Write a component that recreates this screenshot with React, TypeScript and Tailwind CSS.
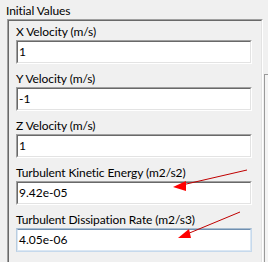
import React from "react";

const fields = [
  { label: "X Velocity (m/s)", value: "1" },
  { label: "Y Velocity (m/s)", value: "-1" },
  { label: "Z Velocity (m/s)", value: "1" },
  { label: "Turbulent Kinetic Energy (m2/s2)", value: "9.42e-05" },
  { label: "Turbulent Dissipation Rate (m2/s3)", value: "4.05e-06", hot: true },
];

function Field({ label, value, hot }: { label: string; value: string; hot?: boolean }) {
  return (
    <div className="flex flex-col">
      <div className="h-[16px] leading-[16px] text-[12px] tracking-[-0.1px] text-black whitespace-nowrap">{label}</div>
      <div
        className={`h-[24px] border ${
          hot
            ? "border-t-[#a8bccf] border-l-[#b9cde0] border-r-[#c6d9ec] border-b-[#c6d9ec]"
            : "border-t-[#a0a0a0] border-l-[#a0a0a0] border-r-[#ffffff] border-b-[#ffffff]"
        }`}
      >
        <div
          className={`h-full border bg-white flex items-center pl-[1px] text-[12px] text-black ${
            hot
              ? "border-t-[#6f8fb0] border-l-[#dbe7f3] border-r-[#dbe7f3] border-b-[#dbe7f3]"
              : "border-t-[#696969] border-l-[#696969] border-r-[#e3e3e3] border-b-[#e3e3e3]"
          }`}
        >
          {value}
        </div>
      </div>
    </div>
  );
}

export default function App() {
  return (
    <div
      className="relative w-[268px] h-[262px] overflow-hidden bg-[#f0f0f0]"
      style={{ fontFamily: 'Lato, "Noto Sans", sans-serif' }}
    >
      <div className="h-[19px] pl-[6px] pt-[3px] text-[12px] leading-[16px] tracking-[-0.1px] text-black">Initial Values</div>
      <div className="flex">
        <div className="ml-[7px] w-[256px] h-[260px] border-t border-l border-t-[#a0a0a0] border-l-[#a0a0a0] border-r border-r-[#ffffff]">
          <div className="h-full border-t border-l border-t-[#696969] border-l-[#696969] border-r border-r-[#e3e3e3] pt-[3px] pl-[7px] pr-[9px] flex flex-col gap-[7px]">
            {fields.map((f, i) => (
              <Field key={i} label={f.label} value={f.value} hot={f.hot} />
            ))}
          </div>
        </div>
        <div className="mt-[55px] ml-[1px] flex-1 h-[200px] border-t border-l border-[#9a9a9a] bg-[#f4f4f4]" />
      </div>

      {/* red arrows */}
      <svg className="absolute left-0 top-0 pointer-events-none" width="268" height="262" viewBox="0 0 268 262">
        <line x1="247" y1="170" x2="182" y2="185" stroke="#c00000" strokeWidth="1" />
        <polygon points="173,187 186,181 186,191" fill="#ff0000" />
        <line x1="240" y1="212" x2="187" y2="234" stroke="#c00000" strokeWidth="1" />
        <polygon points="178,238 189,229 191,238" fill="#ff0000" />
      </svg>
    </div>
  );
}
